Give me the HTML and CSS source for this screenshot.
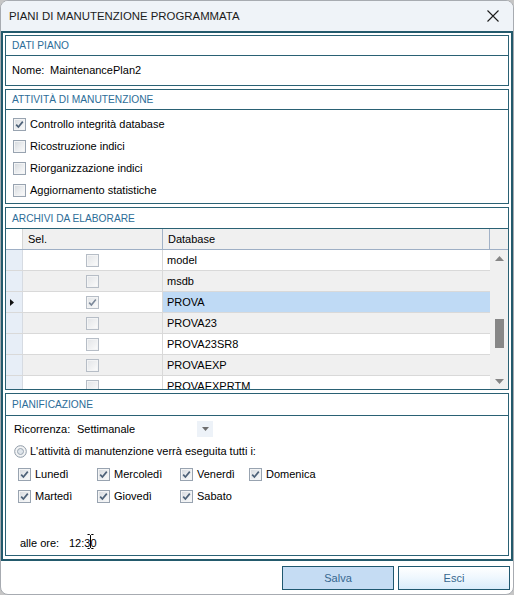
FILE: index.html
```html
<!DOCTYPE html>
<html>
<head>
<meta charset="utf-8">
<title>Piani di manutenzione</title>
<link rel="stylesheet" href="styles.css">
</head>
<body>
<div class="window">
  <div class="titlebar">
    <span class="title">PIANI DI MANUTENZIONE PROGRAMMATA</span>
    <svg class="close" width="12" height="12" viewBox="0 0 12 12"><path d="M0.5 0.5 L11.5 11.5 M11.5 0.5 L0.5 11.5" stroke="#1c1c1c" stroke-width="1.1" fill="none"/></svg>
  </div>
  <div class="frame">
    <section class="group g1">
      <div class="ghead">DATI PIANO</div>
      <div class="nome-row"><span class="nome-label">Nome:</span><span>MaintenancePlan2</span></div>
    </section>

    <section class="group g2">
      <div class="ghead">ATTIVITÀ DI MANUTENZIONE</div>
      <div class="checks">
        <div class="chk"><span class="cb"><svg viewBox="0 0 11 11"><path d="M2.2 5.6 L4.4 8 L8.8 2.6" stroke="#4d6178" stroke-width="1.7" fill="none"/></svg></span>Controllo integrità database</div>
        <div class="chk"><span class="cb"></span>Ricostruzione indici</div>
        <div class="chk"><span class="cb"></span>Riorganizzazione indici</div>
        <div class="chk"><span class="cb"></span>Aggiornamento statistiche</div>
      </div>
    </section>

    <section class="group g3">
      <div class="ghead">ARCHIVI DA ELABORARE</div>
      <div class="grid">
        <div class="hrow">
          <div class="rh corner"></div>
          <div class="c-sel">Sel.</div>
          <div class="c-db">Database</div>
          <div class="c-sp"></div>
        </div>
        <div class="gbody">
          <div class="rows">
            <div class="row"><div class="rh"></div><div class="c-sel"><span class="cb light"></span></div><div class="c-db">model</div></div>
            <div class="row alt"><div class="rh"></div><div class="c-sel"><span class="cb light"></span></div><div class="c-db">msdb</div></div>
            <div class="row sel"><div class="rh"><svg class="marker" width="4" height="7" viewBox="0 0 4 7"><path d="M0 0 L4 3.5 L0 7 Z" fill="#111"/></svg></div><div class="c-sel"><span class="cb light"><svg viewBox="0 0 11 11"><path d="M2.2 5.6 L4.4 8 L8.8 2.6" stroke="#7b8899" stroke-width="1.6" fill="none"/></svg></span></div><div class="c-db">PROVA</div></div>
            <div class="row alt"><div class="rh"></div><div class="c-sel"><span class="cb light"></span></div><div class="c-db">PROVA23</div></div>
            <div class="row"><div class="rh"></div><div class="c-sel"><span class="cb light"></span></div><div class="c-db">PROVA23SR8</div></div>
            <div class="row alt"><div class="rh"></div><div class="c-sel"><span class="cb light"></span></div><div class="c-db">PROVAEXP</div></div>
            <div class="row"><div class="rh"></div><div class="c-sel"><span class="cb light"></span></div><div class="c-db">PROVAEXPRTM</div></div>
          </div>
          <div class="scroll">
            <svg class="arr" width="9" height="5" viewBox="0 0 9 5"><path d="M0 5 L4.5 0 L9 5 Z" fill="#858585"/></svg>
            <div class="track"><div class="thumb"></div></div>
            <svg class="arr" width="9" height="5" viewBox="0 0 9 5"><path d="M0 0 L4.5 5 L9 0 Z" fill="#858585"/></svg>
          </div>
        </div>
      </div>
    </section>

    <section class="group g4">
      <div class="ghead">PIANIFICAZIONE</div>
      <div class="plan">
        <div class="ric-row">
          <span class="ric-label">Ricorrenza:</span>
          <span class="ric-value">Settimanale</span>
          <span class="dd"><svg width="7" height="4" viewBox="0 0 7 4"><path d="M0 0 L3.5 4 L7 0 Z" fill="#6e6e6e"/></svg></span>
        </div>
        <div class="radio-row">
          <svg class="radio" width="13" height="13" viewBox="0 0 13 13">
            <circle cx="6.5" cy="6.5" r="5.8" fill="#f4f5f6" stroke="#8d99a6" stroke-width="1"/>
            <circle cx="6.5" cy="6.5" r="3" fill="#dfe5eb" stroke="#9aa6b2" stroke-width="1"/>
          </svg>
          <span>L'attività di manutenzione verrà eseguita tutti i:</span>
        </div>
        <div class="days">
          <div class="chk"><span class="cb"><svg viewBox="0 0 11 11"><path d="M2.2 5.6 L4.4 8 L8.8 2.6" stroke="#4d6178" stroke-width="1.7" fill="none"/></svg></span>Lunedì</div>
          <div class="chk"><span class="cb"><svg viewBox="0 0 11 11"><path d="M2.2 5.6 L4.4 8 L8.8 2.6" stroke="#4d6178" stroke-width="1.7" fill="none"/></svg></span>Mercoledì</div>
          <div class="chk"><span class="cb"><svg viewBox="0 0 11 11"><path d="M2.2 5.6 L4.4 8 L8.8 2.6" stroke="#4d6178" stroke-width="1.7" fill="none"/></svg></span>Venerdì</div>
          <div class="chk"><span class="cb"><svg viewBox="0 0 11 11"><path d="M2.2 5.6 L4.4 8 L8.8 2.6" stroke="#4d6178" stroke-width="1.7" fill="none"/></svg></span>Domenica</div>
          <div class="chk"><span class="cb"><svg viewBox="0 0 11 11"><path d="M2.2 5.6 L4.4 8 L8.8 2.6" stroke="#4d6178" stroke-width="1.7" fill="none"/></svg></span>Martedì</div>
          <div class="chk"><span class="cb"><svg viewBox="0 0 11 11"><path d="M2.2 5.6 L4.4 8 L8.8 2.6" stroke="#4d6178" stroke-width="1.7" fill="none"/></svg></span>Giovedì</div>
          <div class="chk"><span class="cb"><svg viewBox="0 0 11 11"><path d="M2.2 5.6 L4.4 8 L8.8 2.6" stroke="#4d6178" stroke-width="1.7" fill="none"/></svg></span>Sabato</div>
        </div>
        <div class="ore-row">
          <span class="ore-label">alle ore:</span>
          <span class="ore-value">12:30<svg class="ibeam" width="7" height="15" viewBox="0 0 7 15"><path d="M0.5 0.5 H2.5 L3.5 1.5 L4.5 0.5 H6.5 M3.5 1.5 V13.5 M0.5 14.5 H2.5 L3.5 13.5 L4.5 14.5 H6.5" stroke="#000" stroke-width="1" fill="none"/></svg></span>
        </div>
      </div>
    </section>
  </div>
  <div class="footer">
    <button class="btn salva">Salva</button>
    <button class="btn esci">Esci</button>
  </div>
</div>
</body>
</html>
```

FILE: styles.css
```css
* { box-sizing: border-box; }
html, body { margin: 0; padding: 0; }
body {
  width: 514px;
  height: 595px;
  overflow: hidden;
  background: #c6c6c6;
  font-family: "Liberation Sans", Arial, sans-serif;
  font-size: 11px;
  color: #000;
}
.window {
  width: 514px;
  height: 595px;
  border: 1px solid #a7abb1;
  border-radius: 8px;
  overflow: hidden;
  background: #fff;
  display: flex;
  flex-direction: column;
}
.titlebar {
  flex: none;
  height: 30px;
  background: #eff3f8;
  display: flex;
  align-items: center;
  justify-content: space-between;
  padding: 0 14px 0 8px;
}
.title { font-size: 11.4px; color: #1b1b1b; letter-spacing: 0; }
.close { display: block; }

.frame {
  flex: none;
  height: 530px;
  border: 2px solid #235a6c;
  padding: 2px 2px 3px;
  display: flex;
  flex-direction: column;
  gap: 3px;
}
.group {
  flex: none;
  border: 1px solid #2a6174;
  display: flex;
  flex-direction: column;
  background: #fff;
}
.g1 { height: 51px; }
.g2 { height: 115px; }
.g3 { height: 183px; }
.g4 { height: 163px; }
.ghead {
  flex: none;
  height: 20px;
  border-bottom: 1px solid #2a6174;
  padding-left: 6px;
  display: flex;
  align-items: center;
  color: #2d6d98;
  font-size: 10.2px;
}
.g3 .ghead { height: 21px; }
.g4 .ghead { height: 22px; }

/* Dati piano */
.nome-row {
  flex: 1;
  display: flex;
  align-items: center;
  padding: 0 0 1px 6px;
}
.nome-label { width: 38px; }

/* checkboxes */
.cb {
  flex: none;
  width: 13px;
  height: 13px;
  border: 1px solid #98a3b0;
  background: linear-gradient(135deg, #d4d8dd 0%, #eceef0 55%, #fbfbfb 100%);
  box-shadow: inset 0 0 0 1px #f3f4f5;
  display: inline-flex;
  align-items: center;
  justify-content: center;
}
.cb svg { width: 11px; height: 11px; display: block; }
.cb.light {
  border-color: #b6bdc6;
  background: linear-gradient(135deg, #e2e4e7 0%, #f1f2f3 60%, #fdfdfd 100%);
}
.chk {
  display: flex;
  align-items: center;
  gap: 4px;
  height: 22px;
  white-space: nowrap;
}
.checks {
  display: flex;
  flex-direction: column;
  padding: 3px 0 0 7px;
}

/* grid */
.grid { flex: 1; display: flex; flex-direction: column; min-height: 0; }
.hrow {
  flex: none;
  height: 21px;
  display: flex;
  background: #f0f0f0;
  border-bottom: 1px solid #9eafc5;
}
.hrow > div { display: flex; align-items: center; padding-left: 5px; }
.hrow .rh.corner { background: #fff; border-right: 1px solid #d6d6d6; }
.hrow .c-sel { border-right: 1px solid #a2b2c7; }
.hrow .c-db { border-right: 1px solid #a2b2c7; }
.hrow .c-sp { width: 17px; padding: 0; }
.rh { width: 17px; flex: none; }
.c-sel { width: 140px; flex: none; }
.c-db { width: 327px; flex: none; }

.gbody { flex: 1; display: flex; min-height: 0; }
.rows { width: 484px; overflow: hidden; }
.row {
  height: 21px;
  display: flex;
  background: #fff;
  border-bottom: 1px solid #d9d9d9;
}
.row.alt { background: #f0f0f0; }
.row .rh {
  background: #e7eef7;
  border-right: 1px solid #d6dbe2;
  display: flex;
  align-items: center;
  padding-left: 4px;
}
.row .c-sel {
  border-right: 1px solid #d9d9d9;
  display: flex;
  align-items: center;
  justify-content: center;
  padding-right: 1px;
}
.row .c-db { display: flex; align-items: center; padding-left: 4px; }
.row.sel .c-db { background: #bfdaf5; }
.marker { display: block; }

.scroll {
  width: 18px;
  flex: none;
  background: #f0f0f0;
  display: flex;
  flex-direction: column;
  align-items: center;
  padding: 6px 0 5px;
}
.arr { display: block; flex: none; }
.track { flex: 1; width: 100%; padding-top: 58px; display: flex; justify-content: center; }
.thumb { width: 9px; height: 29px; background: #878787; margin-left: 1px; }

/* pianificazione */
.plan { flex: 1; display: flex; flex-direction: column; padding: 2px 0 0 8px; }
.ric-row { height: 22px; display: flex; align-items: center; }
.ric-label { width: 63px; }
.ric-value { width: 120px; }
.dd {
  width: 16px;
  height: 16px;
  background: #edf2f8;
  display: flex;
  align-items: center;
  justify-content: center;
}
.radio-row { height: 22px; display: flex; align-items: center; gap: 3px; }
.radio { display: block; }
.days {
  margin: 1px 0 0 4px;
  display: grid;
  grid-template-columns: 79px 83px 69px auto;
}
.ore-row {
  margin-top: 25px;
  height: 22px;
  display: flex;
  align-items: center;
  padding-left: 6px;
}
.ore-label { width: 49px; }
.ore-value { position: relative; }
.ibeam { position: absolute; left: 18px; top: -3px; }

/* footer */
.footer {
  flex: 1;
  display: flex;
  justify-content: flex-end;
  align-items: flex-start;
  gap: 4px;
  padding: 5px 3px 0 0;
}
.btn {
  width: 112px;
  height: 24px;
  border: 1px solid #1f5870;
  font-family: "Liberation Sans", Arial, sans-serif;
  font-size: 11px;
  color: #36678f;
  padding: 0;
}
.salva { background: #c5dcf3; }
.esci { background: linear-gradient(#ffffff 0%, #eef7fe 50%, #d9ecfb 100%); }
```
